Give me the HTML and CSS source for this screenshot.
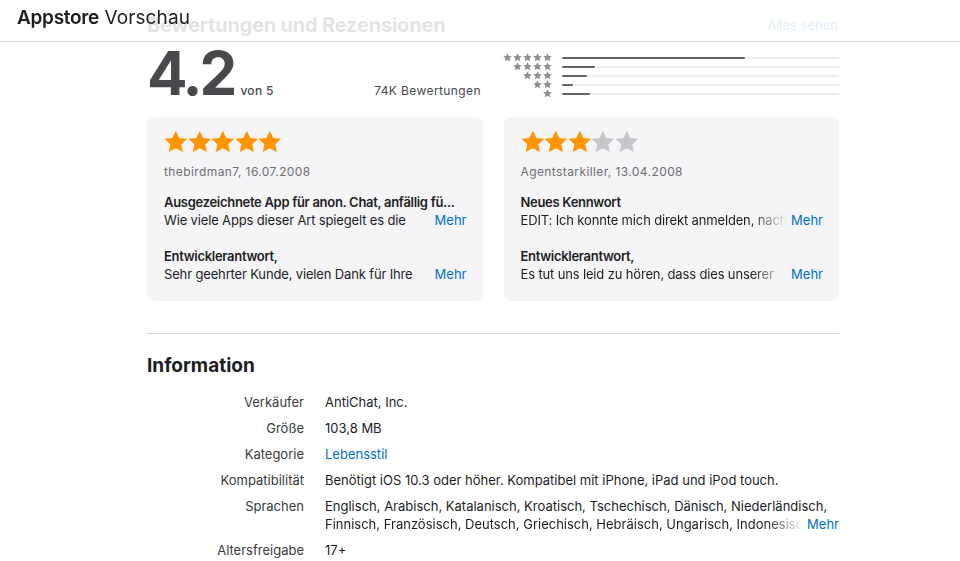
FILE: index.html
```html
<!DOCTYPE html>
<html lang="de">
<head>
  <meta charset="UTF-8">
  <meta name="viewport" content="width=device-width, initial-scale=1.0">
  <title>Appstore Vorschau</title>
  <link rel="stylesheet" href="styles.css">
</head>
<body>
  <svg width="0" height="0" class="defs">
    <symbol id="star" viewBox="0 0 24 24">
      <path d="M12 0.6l3.5 7.3 8 .9-5.9 5.5 1.6 7.9L12 18.3l-7.2 3.9 1.6-7.9L.5 8.8l8-.9z"/>
    </symbol>
  </svg>

  <div class="topbar">
    <span class="brand"><b>Appstore</b> Vorschau</span>
  </div>

  <div class="page">
    <section class="ratings">
      <div class="section-head">
        <h2>Bewertungen und Rezensionen</h2>
        <a href="#" class="see-all">Alles sehen</a>
      </div>

      <div class="summary">
        <div class="score">
          <div class="score-left">
            <span class="big">4.2</span>
            <span class="of">von 5</span>
          </div>
          <span class="count">74K Bewertungen</span>
        </div>
        <div class="histogram">
          <div class="hist-row">
            <span class="hist-stars"><svg><use href="#star"/></svg><svg><use href="#star"/></svg><svg><use href="#star"/></svg><svg><use href="#star"/></svg><svg><use href="#star"/></svg></span>
            <span class="bar"><span class="fill" style="width: 66%"></span></span>
          </div>
          <div class="hist-row">
            <span class="hist-stars"><svg><use href="#star"/></svg><svg><use href="#star"/></svg><svg><use href="#star"/></svg><svg><use href="#star"/></svg></span>
            <span class="bar"><span class="fill" style="width: 12%"></span></span>
          </div>
          <div class="hist-row">
            <span class="hist-stars"><svg><use href="#star"/></svg><svg><use href="#star"/></svg><svg><use href="#star"/></svg></span>
            <span class="bar"><span class="fill" style="width: 9%"></span></span>
          </div>
          <div class="hist-row">
            <span class="hist-stars"><svg><use href="#star"/></svg><svg><use href="#star"/></svg></span>
            <span class="bar"><span class="fill" style="width: 4%"></span></span>
          </div>
          <div class="hist-row">
            <span class="hist-stars"><svg><use href="#star"/></svg></span>
            <span class="bar"><span class="fill" style="width: 10%"></span></span>
          </div>
        </div>
      </div>

      <div class="reviews">
        <div class="review">
          <div class="stars">
            <svg class="on"><use href="#star"/></svg><svg class="on"><use href="#star"/></svg><svg class="on"><use href="#star"/></svg><svg class="on"><use href="#star"/></svg><svg class="on"><use href="#star"/></svg>
          </div>
          <div class="author">thebirdman7, 16.07.2008</div>
          <h3>Ausgezeichnete App für anon. Chat, anfällig fü...</h3>
          <div class="line">
            <span class="text">Wie viele Apps dieser Art spiegelt es die</span>
            <a href="#">Mehr</a>
          </div>
          <h3 class="reply">Entwicklerantwort,</h3>
          <div class="line">
            <span class="text">Sehr geehrter Kunde, vielen Dank für Ihre</span>
            <a href="#">Mehr</a>
          </div>
        </div>

        <div class="review">
          <div class="stars">
            <svg class="on"><use href="#star"/></svg><svg class="on"><use href="#star"/></svg><svg class="on"><use href="#star"/></svg><svg><use href="#star"/></svg><svg><use href="#star"/></svg>
          </div>
          <div class="author">Agentstarkiller, 13.04.2008</div>
          <h3>Neues Kennwort</h3>
          <div class="line">
            <span class="text fade">EDIT: Ich konnte mich direkt anmelden, nachdem ich</span>
            <a href="#">Mehr</a>
          </div>
          <h3 class="reply">Entwicklerantwort,</h3>
          <div class="line">
            <span class="text fade">Es tut uns leid zu hören, dass dies unserer</span>
            <a href="#">Mehr</a>
          </div>
        </div>
      </div>
    </section>

    <section class="info">
      <h2>Information</h2>
      <dl class="info-list">
        <dt>Verkäufer</dt>
        <dd>AntiChat, Inc.</dd>
        <dt>Größe</dt>
        <dd>103,8 MB</dd>
        <dt>Kategorie</dt>
        <dd><a href="#">Lebensstil</a></dd>
        <dt>Kompatibilität</dt>
        <dd>Benötigt iOS 10.3 oder höher. Kompatibel mit iPhone, iPad und iPod touch.</dd>
        <dt>Sprachen</dt>
        <dd class="langs">
          <span>Englisch, Arabisch, Katalanisch, Kroatisch, Tschechisch, Dänisch, Niederländisch,</span>
          <span class="line">
            <span class="text fade">Finnisch, Französisch, Deutsch, Griechisch, Hebräisch, Ungarisch, Indonesisch, Italienisch</span>
            <a href="#">Mehr</a>
          </span>
        </dd>
        <dt>Altersfreigabe</dt>
        <dd>17+</dd>
      </dl>
    </section>
  </div>
</body>
</html>
```

FILE: styles.css
```css
body {
  margin: 0;
  font-family: Inter, "Noto Sans", sans-serif;
  font-size: 13px;
  color: #1d1d1f;
  background-color: #fff;
}

a {
  color: #0070c9;
  text-decoration: none;
}

.defs {
  position: absolute;
}

/* top bar sits over the scrolled page */
.topbar {
  position: fixed;
  top: 0;
  left: 0;
  right: 0;
  height: 41px;
  padding: 0 17px;
  display: flex;
  align-items: center;
  background-color: rgba(255, 255, 255, 0.88);
  border-bottom: 1px solid #d2d2d7;
  z-index: 10;
}

.brand {
  font-size: 19px;
  color: #1d1d1f;
  letter-spacing: 0.1px;
  margin-top: -6px;
}

.brand b {
  font-weight: 600;
  letter-spacing: -0.3px;
}

.page {
  width: 692px;
  margin-left: 147px;
  padding-top: 11px;
}

.section-head {
  display: flex;
  justify-content: space-between;
  align-items: center;
  height: 28px;
}

.section-head h2 {
  margin: 0;
  font-size: 20px;
  font-weight: 700;
  letter-spacing: -0.2px;
}

.see-all {
  font-size: 13px;
  margin-right: 1px;
}

/* rating summary */
.summary {
  display: flex;
  margin-top: 10px;
  height: 49px;
}

.score {
  width: 335px;
  display: flex;
  justify-content: space-between;
  align-items: flex-end;
}

.score-left {
  display: flex;
  align-items: baseline;
}

.big {
  font-size: 60px;
  font-weight: 700;
  line-height: 46px;
  letter-spacing: -3px;
  color: #48484d;
}

.of {
  font-size: 12px;
  color: #48484d;
  margin-left: 6px;
  letter-spacing: 0.3px;
  font-weight: 500;
}

.count {
  font-size: 12px;
  color: #48484d;
  letter-spacing: 0.4px;
  margin-right: 1px;
}

.histogram {
  flex: 1;
  padding-top: 4px;
}

.hist-row {
  display: flex;
  align-items: center;
  height: 9px;
}

.hist-stars {
  width: 70px;
  display: flex;
  justify-content: flex-end;
  margin-right: 10px;
}

.hist-stars svg {
  width: 9px;
  height: 9px;
  margin-left: 1px;
  fill: #8e8e93;
}

.bar {
  flex: 1;
  height: 2px;
  background-color: #ececf1;
  border-radius: 1px;
}

.fill {
  display: block;
  height: 2px;
  background-color: #636366;
  border-radius: 1px;
}

/* review cards */
.reviews {
  display: grid;
  grid-template-columns: repeat(2, minmax(0, 1fr));
  gap: 21px;
  margin-top: 19px;
}

.review {
  min-width: 0;
  background-color: #f5f5f7;
  border-radius: 8px;
  padding: 13px 16px 18px 17px;
}

.stars {
  display: flex;
  height: 24px;
}

.stars svg {
  width: 23.6px;
  height: 24px;
  fill: #c7c7cc;
}

.stars svg.on {
  fill: #ff9500;
}

.author {
  margin-top: 10px;
  font-size: 12px;
  letter-spacing: 0.4px;
  color: #6e6e73;
  line-height: 16px;
}

.review h3 {
  margin: 13px 0 0;
  font-size: 13px;
  font-weight: 600;
  letter-spacing: -0.3px;
  line-height: 18px;
  white-space: nowrap;
  overflow: hidden;
}

.review h3.reply {
  margin-top: 18px;
}

.review .line {
  letter-spacing: -0.15px;
}

.line {
  display: flex;
  justify-content: space-between;
  line-height: 18px;
}

.line .text {
  min-width: 0;
  white-space: nowrap;
  overflow: hidden;
  margin-right: 8px;
}

.line .text.fade {
  flex: 1;
  -webkit-mask-image: linear-gradient(to left, transparent 0, #000 36px);
  mask-image: linear-gradient(to left, transparent 0, #000 36px);
  margin-right: 4px;
}

.line a {
  flex-shrink: 0;
  letter-spacing: 0;
}

/* information */
.info {
  margin-top: 32px;
  border-top: 1px solid #d2d2d7;
  padding-top: 20px;
}

.info h2 {
  margin: 0;
  font-size: 19px;
  font-weight: 700;
  line-height: 24px;
}

.info-list {
  display: grid;
  grid-template-columns: 157px minmax(0, 1fr);
  column-gap: 21px;
  row-gap: 8px;
  margin: 15px 0 0;
  line-height: 18px;
}

.info-list dt {
  text-align: right;
  color: #3a3a3c;
}

.info-list dd {
  margin: 0;
  min-width: 0;
}

.langs {
  display: flex;
  flex-direction: column;
}
```
